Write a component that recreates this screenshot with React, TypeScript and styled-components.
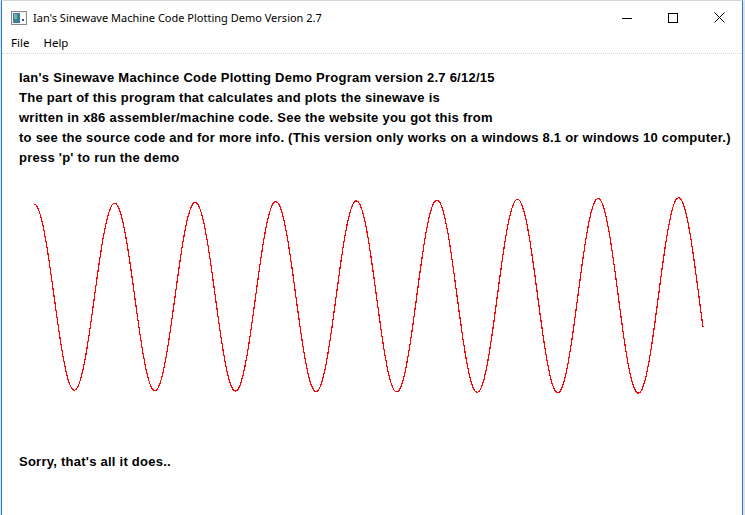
import React from 'react';
import styled, { createGlobalStyle } from 'styled-components';

const GlobalStyle = createGlobalStyle`
  html, body {
    margin: 0;
    padding: 0;
    background: #e4dfe8;
    overflow: hidden;
  }
`;

const Screen = styled.div`
  width: 745px;
  height: 515px;
  padding-left: 1px;
  box-sizing: border-box;
  overflow: hidden;
`;

const Window = styled.div`
  width: 742px;
  height: 540px;
  box-sizing: border-box;
  background: #fff;
  border-top: 1px solid #d6d6d6;
  border-left: 1px solid #1a7fd4;
  border-right: 1px solid #1a7fd4;
  display: flex;
  flex-direction: column;
`;

const TitleBar = styled.div`
  height: 31px;
  display: flex;
  align-items: center;
  font-family: 'Noto Sans', 'Liberation Sans', sans-serif;
  font-size: 11px;
  color: #000;
`;

const AppIcon = styled.div`
  width: 16px;
  height: 14px;
  margin: 2px 6px 0 9px;
  display: flex;
`;

const Title = styled.div`
  flex: 1;
  padding-top: 2px;
  white-space: nowrap;
`;

const CaptionButton = styled.div`
  width: 46px;
  height: 31px;
  display: flex;
  align-items: center;
  justify-content: center;
  padding-top: 2px;
  box-sizing: border-box;
`;

const MenuBar = styled.div`
  height: 21px;
  display: flex;
  align-items: center;
  padding-left: 2px;
  font-family: 'Noto Sans', 'Liberation Sans', sans-serif;
  font-size: 11.5px;
  border-bottom: 1px dotted #d4d4d4;
`;

const MenuItem = styled.span`
  padding: 0 7px;
`;

const Client = styled.div`
  flex: 1;
  display: flex;
  flex-direction: column;
  font-family: 'Liberation Sans', Arial, sans-serif;
  font-weight: bold;
  font-size: 13px;
  letter-spacing: 0.25px;
  color: #000;
`;

const Intro = styled.div`
  padding: 14px 0 0 17px;
  line-height: 20px;
`;

const Line = styled.div`
  white-space: nowrap;
`;

const Plot = styled.svg`
  display: block;
  margin-top: 22px;
`;

const Footer = styled.div`
  padding: 42px 0 0 17px;
  line-height: 20px;
`;

const lines = [
  "Ian's Sinewave Machince Code Plotting Demo Program version 2.7 6/12/15",
  'The part of this program that calculates and plots the sinewave is',
  'written in x86 assembler/machine code. See the website you got this from',
  'to see the source code and for more info. (This version only works on a windows 8.1 or windows 10 computer.)',
  "press 'p' to run the demo",
];

// plot area starts at page y 190
const PLOT_TOP = 190;

function wavePath() {
  const pts: string[] = [];
  const x0 = 32;
  const x1 = 701;
  const period = 80.58;
  for (let x = x0; x <= x1; x++) {
    const t = (x - x0) / (x1 - x0);
    const amp = 93 + t * 5;
    const mid = 297 - t * 1.5;
    const y = mid - amp * Math.cos((2 * Math.PI * (x - x0)) / period);
    pts.push(`${x},${(y - PLOT_TOP).toFixed(1)}`);
  }
  return 'M' + pts.join(' L');
}

export default function App() {
  return (
    <>
      <GlobalStyle />
      <Screen>
        <Window>
          <TitleBar>
            <AppIcon>
              <svg width="16" height="14" viewBox="0 0 16 14">
                <rect x="0.5" y="0.5" width="15" height="13" fill="#f4f4f4" stroke="#8a8a8a" />
                <rect x="2" y="2" width="7" height="10" fill="#3b7f9c" />
                <rect x="3" y="3" width="3" height="5" fill="#6fb6a8" />
                <rect x="10" y="2" width="4" height="10" fill="#ffffff" />
                <rect x="11" y="8" width="2" height="2" fill="#2c4f7a" />
              </svg>
            </AppIcon>
            <Title>Ian's Sinewave Machine Code Plotting Demo Version 2.7</Title>
            <CaptionButton>
              <svg width="10" height="10" viewBox="0 0 10 10">
                <line x1="0" y1="5.5" x2="10" y2="5.5" stroke="#000" strokeWidth="1" />
              </svg>
            </CaptionButton>
            <CaptionButton>
              <svg width="10" height="10" viewBox="0 0 10 10">
                <rect x="0.5" y="0.5" width="9" height="9" fill="none" stroke="#000" strokeWidth="1" />
              </svg>
            </CaptionButton>
            <CaptionButton>
              <svg width="11" height="11" viewBox="0 0 11 11">
                <path d="M0.5 0.5 L10.5 10.5 M10.5 0.5 L0.5 10.5" stroke="#000" strokeWidth="1" />
              </svg>
            </CaptionButton>
          </TitleBar>
          <MenuBar>
            <MenuItem>File</MenuItem>
            <MenuItem>Help</MenuItem>
          </MenuBar>
          <Client>
            <Intro>
              {lines.map((l) => (
                <Line key={l}>{l}</Line>
              ))}
            </Intro>
            <Plot width="740" height="220" viewBox="0 0 740 220">
              <path d={wavePath()} fill="none" stroke="#ff0000" strokeWidth="1.2" shapeRendering="crispEdges" />
            </Plot>
            <Footer>Sorry, that's all it does..</Footer>
          </Client>
        </Window>
      </Screen>
    </>
  );
}
